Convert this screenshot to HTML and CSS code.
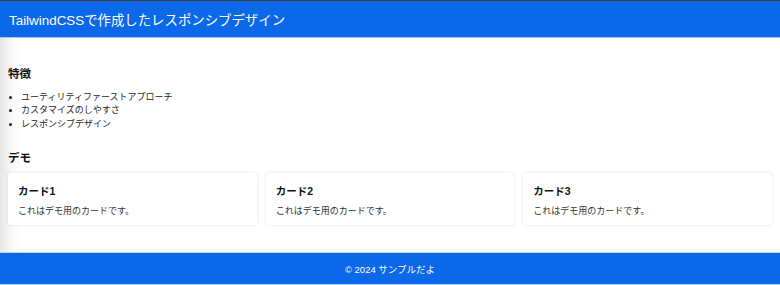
FILE: index.html
```html
<!DOCTYPE html>
<html lang="ja">
<head>
    <meta charset="UTF-8">
    <meta name="viewport" content="width=device-width, initial-scale=1.0">
    <title>TailwindCSSで作成したレスポンシブデザイン</title>
    <link rel="stylesheet" href="styles.css">
</head>
<body>
    <header class="site-header">
        <h1>TailwindCSSで作成したレスポンシブデザイン</h1>
    </header>

    <main class="content">
        <section class="features">
            <h2>特徴</h2>
            <ul>
                <li>ユーティリティファーストアプローチ</li>
                <li>カスタマイズのしやすさ</li>
                <li>レスポンシブデザイン</li>
            </ul>
        </section>

        <section class="demo">
            <h2>デモ</h2>
            <div class="cards">
                <div class="card">
                    <h3>カード1</h3>
                    <p>これはデモ用のカードです。</p>
                </div>
                <div class="card">
                    <h3>カード2</h3>
                    <p>これはデモ用のカードです。</p>
                </div>
                <div class="card">
                    <h3>カード3</h3>
                    <p>これはデモ用のカードです。</p>
                </div>
            </div>
        </section>
    </main>

    <footer class="site-footer">
        <p>&copy; 2024 サンプルだよ</p>
    </footer>
</body>
</html>
```

FILE: styles.css
```css
body {
    margin: 0;
    font-family: "Liberation Sans", "Noto Sans CJK JP", sans-serif;
    color: #1f2328;
    background: #fff;
    border-top: 1px solid #3a3a3a;
}
.site-header {
    background: #0b68e9;
    height: 36px;
    display: flex;
    align-items: center;
    padding: 0 9px;
    border-bottom: 1px solid #9ec3f5;
}
.site-header h1 {
    margin: 0;
    font-size: 13.4px;
    font-weight: normal;
    color: #fff;
}
.content {
    height: 214px;
    padding: 0 8px;
    background: linear-gradient(to right, #e6e6e6 0, #fbfbfb 14px, #fff 24px);
    box-sizing: border-box;
    overflow: hidden;
}
.content h2 {
    margin: 0;
    font-size: 11.5px;
    font-weight: bold;
    color: #111;
}
.features {
    padding-top: 27px;
}
.features ul {
    margin: 10px 0 0;
    padding-left: 13px;
    font-size: 9px;
    line-height: 13.3px;
}
.demo {
    padding-top: 18px;
}
.cards {
    display: grid;
    grid-template-columns: repeat(3, 1fr);
    gap: 9px;
    margin-top: 8px;
}
.card {
    background: #fff;
    border-radius: 3px;
    box-shadow: 0 0 3px rgba(0, 0, 0, 0.12);
    padding: 10px 10px 12px;
    height: 52px;
    box-sizing: border-box;
}
.card h3 {
    margin: 0;
    font-size: 10.5px;
    font-weight: bold;
    color: #111;
}
.card p {
    margin: 6px 0 0;
    font-size: 9px;
    color: #333;
}
.site-footer {
    background: #0b68e9;
    height: 31px;
    display: flex;
    align-items: center;
    justify-content: center;
    border-top: 1px solid #b9d2f5;
    border-bottom: 1px solid #b9d2f5;
}
.site-footer p {
    margin: 0;
    font-size: 9.5px;
    color: #fff;
}
```
